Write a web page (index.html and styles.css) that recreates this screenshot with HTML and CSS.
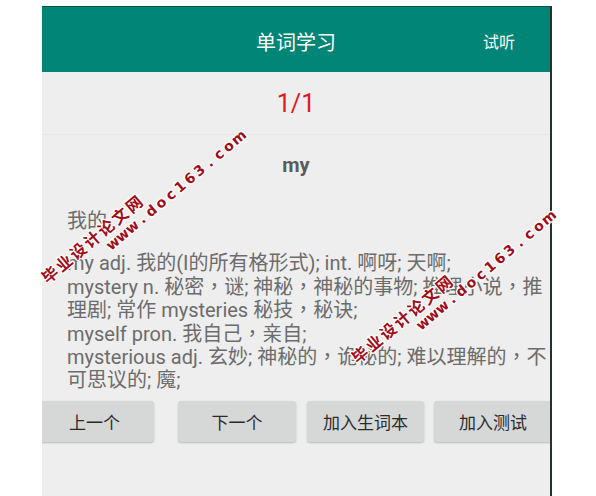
FILE: index.html
```html
<!DOCTYPE html>
<html lang="zh-CN">
<head>
<meta charset="utf-8">
<title>单词学习</title>
<link rel="stylesheet" href="styles.css">
</head>
<body>
<div class="page">
  <div class="screen">
    <header class="appbar">
      <div class="appbar-title">单词学习</div>
      <div class="appbar-action">试听</div>
    </header>
    <div class="counter">1/1</div>
    <div class="word">my</div>
    <div class="meaning">我的</div>
    <div class="related">
      <div class="entry">my adj. 我的(I的所有格形式); int. 啊呀; 天啊;</div>
      <div class="entry">mystery n. 秘密，谜; 神秘，神秘的事物; 推理小说，推理剧; 常作 mysteries 秘技，秘诀;</div>
      <div class="entry">myself pron. 我自己，亲自;</div>
      <div class="entry">mysterious adj. 玄妙; 神秘的，诡秘的; 难以理解的，不可思议的; 魔;</div>
    </div>
    <div class="buttons">
      <div class="btn btn-prev">上一个</div>
      <div class="btn btn-next">下一个</div>
      <div class="btn btn-add">加入生词本</div>
      <div class="btn btn-test">加入测试</div>
    </div>
  </div>

  <div class="wm wm1">
    <div class="wm-cn">毕业设计论文网</div>
    <div class="wm-en"><span>w</span><span>w</span><span>w</span><span>.</span><span>d</span><span>o</span><span>c</span><span>1</span><span>6</span><span>3</span><span>.</span><span>c</span><span>o</span><span>m</span></div>
  </div>
  <div class="wm wm2">
    <div class="wm-cn">毕业设计论文网</div>
    <div class="wm-en"><span>w</span><span>w</span><span>w</span><span>.</span><span>d</span><span>o</span><span>c</span><span>1</span><span>6</span><span>3</span><span>.</span><span>c</span><span>o</span><span>m</span></div>
  </div>
</div>
</body>
</html>
```
FILE: styles.css
```css
html, body {
  margin: 0;
  padding: 0;
  background: #ffffff;
}

body {
  font-family: Roboto, "Noto Sans CJK SC", sans-serif;
}

.page {
  position: relative;
  width: 596px;
  height: 496px;
  overflow: hidden;
  background: #ffffff;
}

.screen {
  margin-left: 42px;
  margin-top: 6px;
  width: 508px;
  height: 489px;
  border-top: 1px solid #00574b;
  border-right: 2px solid #263030;
  background: #eeeeee;
  overflow: hidden;
}

.appbar {
  height: 65px;
  background: #008577;
  color: #ffffff;
  display: flex;
  align-items: center;
  position: relative;
}

.appbar-title {
  flex: 1;
  text-align: center;
  font-size: 20px;
  margin-top: 3px;
}

.appbar-action {
  position: absolute;
  right: 35px;
  top: 0;
  height: 65px;
  display: flex;
  align-items: center;
  font-size: 16px;
  padding-top: 3px;
  box-sizing: border-box;
}

.counter {
  height: 62px;
  display: flex;
  align-items: center;
  justify-content: center;
  color: #e0191f;
  font-size: 25px;
  border-bottom: 1px solid #e6e6e6;
}

.word {
  height: 60px;
  display: flex;
  align-items: center;
  justify-content: center;
  font-weight: 700;
  font-size: 20px;
  color: #5a5a5a;
}

.meaning,
.entry {
  font-family: Roboto, "Noto Sans CJK TC", sans-serif;
  font-feature-settings: "locl" 0;
  font-size: 20px;
  line-height: 23.4px;
  color: #6c6c6c;
}

.meaning {
  margin-top: 15px;
  padding-left: 25px;
}

.related {
  margin-top: 19px;
  padding-left: 25px;
  padding-right: 2px;
}

.buttons {
  display: flex;
  margin-top: 8px;
  margin-left: -7px;
  width: 600px;
}

.btn {
  flex: 0 0 auto;
  width: 119px;
  height: 41px;
  display: flex;
  align-items: center;
  justify-content: center;
  background: #d6d7d7;
  border-radius: 3px;
  box-shadow: 0 1px 2px rgba(0, 0, 0, 0.22);
  color: #2b2b2b;
  font-size: 17px;
}

.btn-next { margin-left: 24px; width: 118px; }
.btn-add { margin-left: 11px; width: 117px; }
.btn-test { margin-left: 10px; width: 118px; }

/* watermark */
.wm {
  position: absolute;
  transform-origin: 0 0;
  transform: rotate(-40deg);
  color: #a00d18;
  font-weight: 700;
  white-space: nowrap;
  text-shadow: 1px 0 0 #fff, -1px 0 0 #fff, 0 1px 0 #fff, 0 -1px 0 #fff,
    1px 1px 0 #fff, -1px -1px 0 #fff, 1px -1px 0 #fff, -1px 1px 0 #fff;
}

.wm1 { left: 38px; top: 273px; }
.wm2 { left: 348px; top: 353px; }

.wm-cn {
  font-family: "Noto Sans CJK SC", sans-serif;
  font-size: 16px;
  line-height: 16px;
  height: 16px;
  letter-spacing: 2.3px;
}

.wm-en {
  display: flex;
  margin-left: 70px;
  height: 18px;
  line-height: 18px;
  font-family: "DejaVu Sans", sans-serif;
  font-size: 14px;
}

.wm-en span {
  width: 12.6px;
  text-align: center;
}
```
